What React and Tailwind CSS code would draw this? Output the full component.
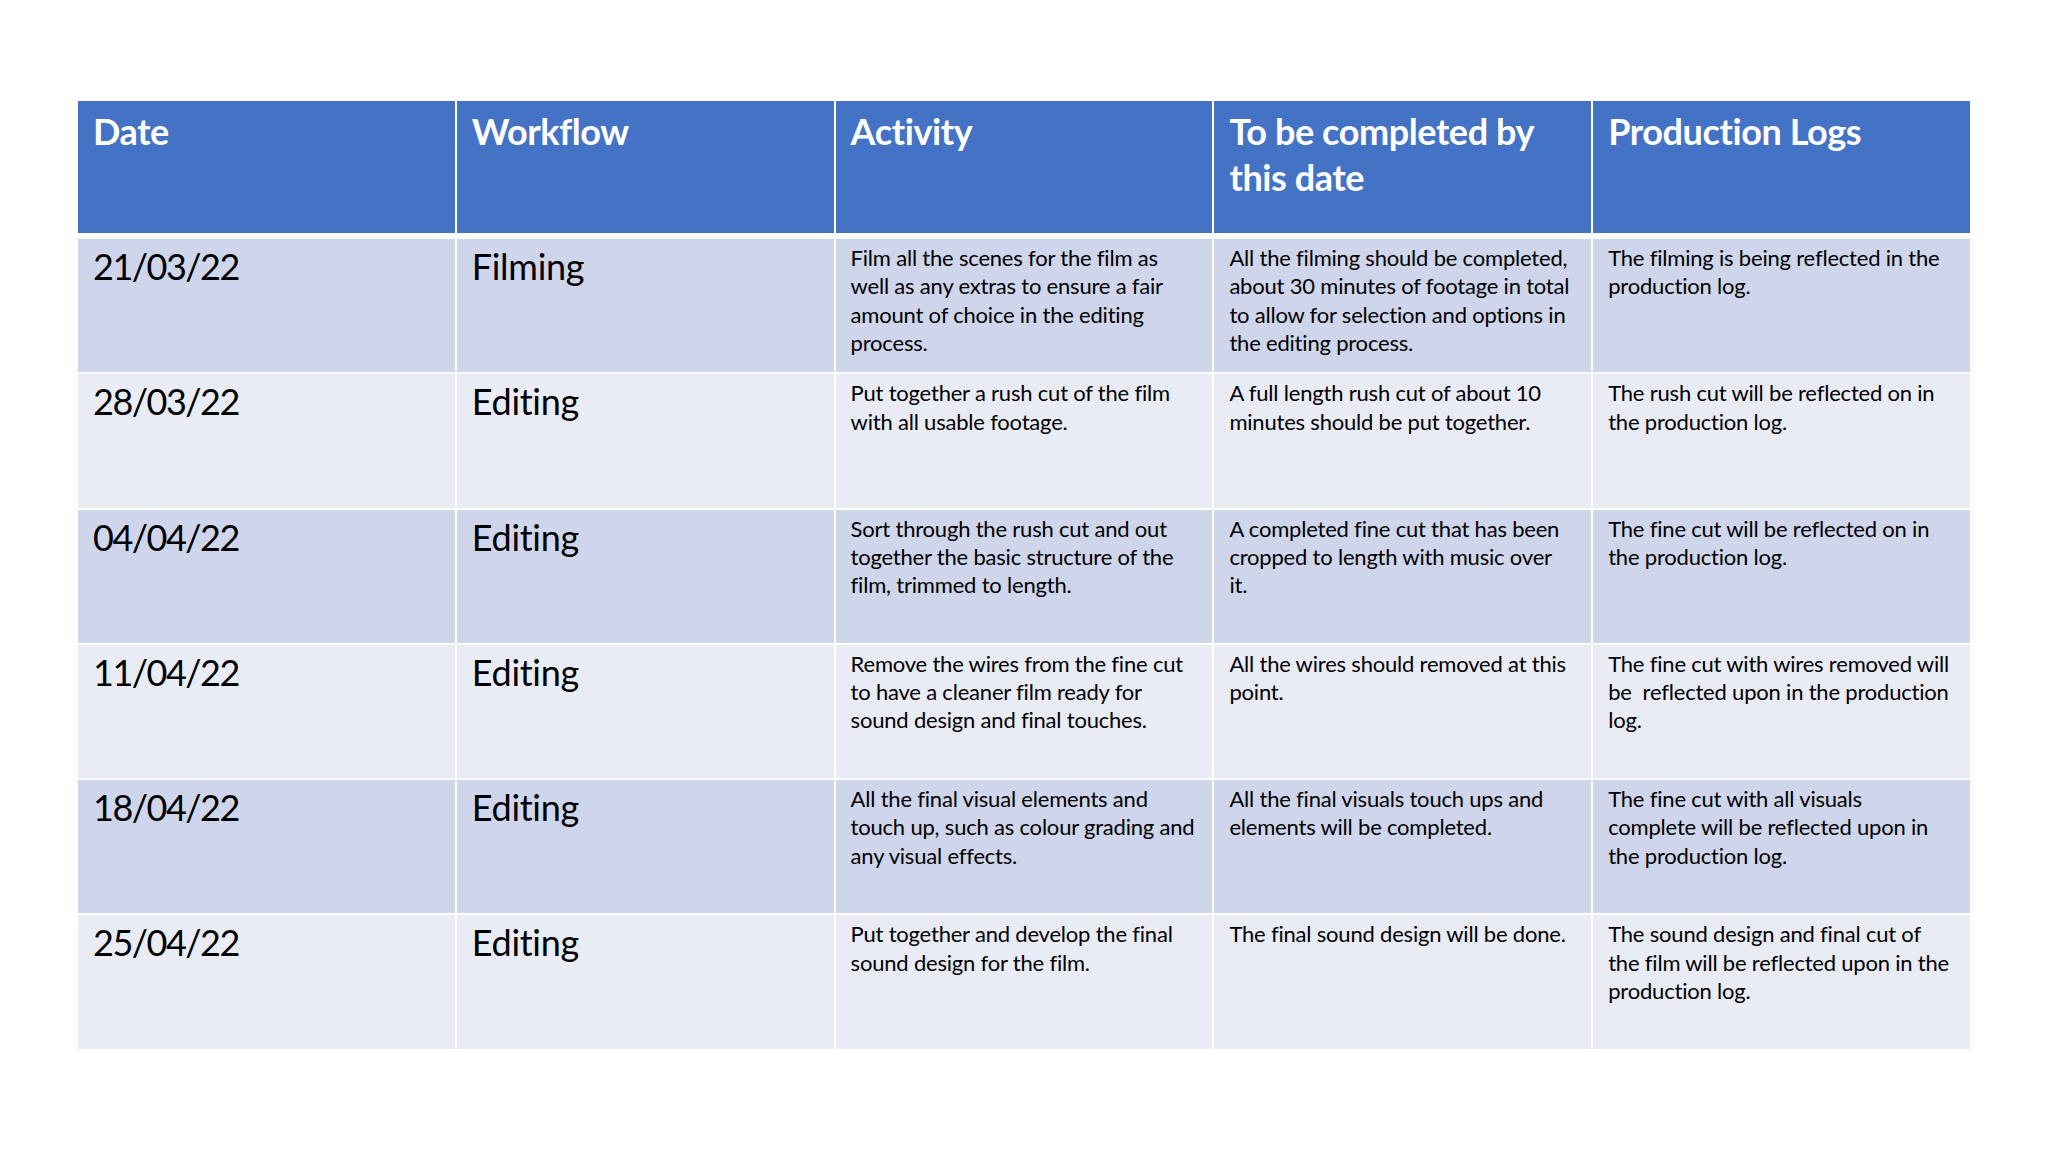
const headers = [['Date'], ['Workflow'], ['Activity'], ['To be completed by', 'this date'], ['Production Logs']];

const rows = [
  {
    date: '21/03/22',
    flow: 'Filming',
    activity: ['Film all the scenes for the film as', 'well as any extras to ensure a fair', 'amount of choice in the editing', 'process.'],
    complete: ['All the filming should be completed,', 'about 30 minutes of footage in total', 'to allow for selection and options in', 'the editing process.'],
    logs: ['The filming is being reflected in the', 'production log.'],
  },
  {
    date: '28/03/22',
    flow: 'Editing',
    activity: ['Put together a rush cut of the film', 'with all usable footage.'],
    complete: ['A full length rush cut of about 10', 'minutes should be put together.'],
    logs: ['The rush cut will be reflected on in', 'the production log.'],
  },
  {
    date: '04/04/22',
    flow: 'Editing',
    activity: ['Sort through the rush cut and out', 'together the basic structure of the', 'film, trimmed to length.'],
    complete: ['A completed fine cut that has been', 'cropped to length with music over', 'it.'],
    logs: ['The fine cut will be reflected on in', 'the production log.'],
  },
  {
    date: '11/04/22',
    flow: 'Editing',
    activity: ['Remove the wires from the fine cut', 'to have a cleaner film ready for', 'sound design and final touches.'],
    complete: ['All the wires should removed at this', 'point.'],
    logs: ['The fine cut with wires removed will', 'be  reflected upon in the production', 'log.'],
  },
  {
    date: '18/04/22',
    flow: 'Editing',
    activity: ['All the final visual elements and', 'touch up, such as colour grading and', 'any visual effects.'],
    complete: ['All the final visuals touch ups and', 'elements will be completed.'],
    logs: ['The fine cut with all visuals', 'complete will be reflected upon in', 'the production log.'],
  },
  {
    date: '25/04/22',
    flow: 'Editing',
    activity: ['Put together and develop the final', 'sound design for the film.'],
    complete: ['The final sound design will be done.'],
    logs: ['The sound design and final cut of', 'the film will be reflected upon in the', 'production log.'],
  },
];

function Lines({ lines }) {
  return lines.map((l, i) => (
    <div key={i} className="whitespace-pre">{l}</div>
  ));
}

function SmallCell({ lines, bg }) {
  return (
    <div className={`${bg} px-[15px] pt-[5px] text-[22px] leading-[28.3px] tracking-[-0.2px] text-black`}>
      <Lines lines={lines} />
    </div>
  );
}

function BigCell({ text, bg, tight }) {
  return (
    <div className={`${bg} px-[15px] pt-[4px] text-[36px] leading-[46px] text-black ${tight ? 'tracking-[-1.5px]' : 'tracking-[-0.3px]'}`}>
      {text}
    </div>
  );
}

export default function App() {
  return (
    <div className="min-h-screen w-full bg-white font-['Lato','Open_Sans',sans-serif]">
      <div className="ml-[78px] w-[1892px] pt-[101px]">
        <div className="grid grid-cols-5 gap-x-[2px]">
          {headers.map((h, i) => (
            <div key={i} className="h-[132px] bg-[#4472c4] px-[15px] pt-[7px] text-[36px] font-bold leading-[46px] tracking-[-0.4px] text-white">
              <Lines lines={h} />
            </div>
          ))}
        </div>
        <div className="mt-[6px] flex flex-col gap-y-[2px]">
          {rows.map((r, i) => {
            const bg = i % 2 === 0 ? 'bg-[#cfd5ea]' : 'bg-[#e9ebf5]';
            return (
              <div key={i} className="grid h-[133.3px] grid-cols-5 gap-x-[2px]">
                <BigCell text={r.date} bg={bg} tight />
                <BigCell text={r.flow} bg={bg} />
                <SmallCell lines={r.activity} bg={bg} />
                <SmallCell lines={r.complete} bg={bg} />
                <SmallCell lines={r.logs} bg={bg} />
              </div>
            );
          })}
        </div>
      </div>
    </div>
  );
}
